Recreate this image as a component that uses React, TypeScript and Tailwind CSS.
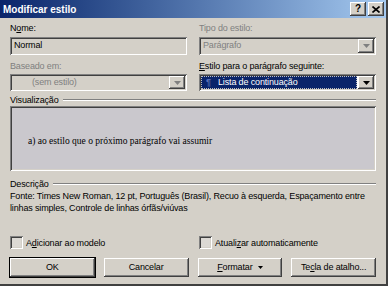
import React from "react";

const raised =
  "shadow-[inset_-1px_-1px_#404040,inset_1px_1px_#ffffff,inset_-2px_-2px_#808080,inset_2px_2px_#d4d0c8]";
const sunken =
  "shadow-[inset_1px_1px_#808080,inset_-1px_-1px_#ffffff,inset_2px_2px_#404040,inset_-2px_-2px_#d4d0c8]";

function Arrow({ disabled, small }: { disabled?: boolean; small?: boolean }) {
  return small ? (
    <svg width="5" height="3" viewBox="0 0 5 3">
      <path d="M0 0 H5 L2.5 3 Z" fill="#000000" />
    </svg>
  ) : (
    <svg width="7" height="4" viewBox="0 0 7 4">
      <path d="M0 0 H7 L3.5 4 Z" fill={disabled ? "#808080" : "#000000"} />
    </svg>
  );
}

function DropButton({ disabled }: { disabled?: boolean }) {
  return (
    <div className={`w-[16px] self-stretch flex items-center justify-center bg-[#d4d0c8] ${raised}`}>
      <Arrow disabled={disabled} />
    </div>
  );
}

function Label({ children, disabled }: { children: React.ReactNode; disabled?: boolean }) {
  return (
    <div className={`h-[12px] leading-[12px] ${disabled ? "text-[#808080]" : "text-black"}`}>{children}</div>
  );
}

function GroupTitle({ children }: { children: React.ReactNode }) {
  return (
    <div className="flex items-center h-[12px] leading-[12px]">
      <span>{children}</span>
      <div className="flex-1 ml-[4px] border-t border-b border-t-[#808080] border-b-white" />
    </div>
  );
}

function Check({ children }: { children: React.ReactNode }) {
  return (
    <div className="flex items-center gap-[3px] h-[13px]">
      <div className={`w-[13px] h-[13px] bg-[#dcd9d4] ${sunken}`} />
      <span className="leading-[12px]">{children}</span>
    </div>
  );
}

function Button({ children, main }: { children: React.ReactNode; main?: boolean }) {
  return (
    <div
      className={`h-[19px] flex items-center justify-center bg-[#d4d0c8] ${raised} ${
        main ? "outline outline-1 outline-black" : ""
      }`}
    >
      {children}
    </div>
  );
}

export default function App() {
  return (
    <div className="w-[388px] h-[286px] bg-[#d4d0c8] flex flex-col font-['Liberation_Sans',Arial,sans-serif] text-[9px] tracking-[-0.15px] text-black border-r-2 border-b-2 border-r-[#404040] border-b-[#404040] overflow-hidden">
      <div className="h-[18px] shrink-0 flex items-center justify-between pl-[3px] pr-[2px] bg-gradient-to-r from-[#0a246a] to-[#a6caf0]">
        <span className="text-white font-bold text-[10px] tracking-normal">Modificar estilo</span>
        <div className="flex gap-[2px]">
          <div className={`w-[16px] h-[14px] flex items-center justify-center bg-[#d4d0c8] ${raised} font-bold text-[10px] leading-none`}>
            ?
          </div>
          <div className={`w-[16px] h-[14px] flex items-center justify-center bg-[#d4d0c8] ${raised}`}>
            <svg width="8" height="7" viewBox="0 0 8 7">
              <path d="M0.5 0.5 L7.5 6.5 M7.5 0.5 L0.5 6.5" stroke="#000" strokeWidth="1.6" />
            </svg>
          </div>
        </div>
      </div>

      <div className="flex-1 flex flex-col px-[10px] pt-[4px]">
        <div className="grid grid-cols-2 gap-x-[12px]">
          <div className="flex flex-col">
            <Label>
              N<span className="underline">o</span>me:
            </Label>
            <div className={`mt-[3px] h-[18px] flex items-center pl-[4px] bg-[#d4d0c8] ${sunken}`}>Normal</div>
          </div>
          <div className="flex flex-col">
            <Label disabled>Tipo do estilo:</Label>
            <div className={`mt-[3px] h-[18px] flex items-center p-[2px] bg-[#d4d0c8] ${sunken}`}>
              <span className="flex-1 pl-[2px] text-[#808080]">Parágrafo</span>
              <DropButton disabled />
            </div>
          </div>
          <div className="flex flex-col mt-[5px]">
            <Label disabled>Baseado em:</Label>
            <div className={`mt-[2px] h-[17px] flex items-center p-[2px] bg-[#d4d0c8] ${sunken}`}>
              <span className="flex-1 pl-[20px] text-[#808080]">(sem estilo)</span>
              <DropButton disabled />
            </div>
          </div>
          <div className="flex flex-col mt-[5px]">
            <Label>
              <span className="underline">E</span>stilo para o parágrafo seguinte:
            </Label>
            <div className={`mt-[2px] h-[17px] flex items-center p-[2px] bg-white ${sunken}`}>
              <div className="flex-1 self-stretch flex items-center bg-[#0a246a] text-white border border-dotted border-[#c0c0c0] mr-[1px]">
                <span className="ml-[4px] w-[12px] text-[#5870b8] font-bold text-[9px]">¶</span>
                <span>Lista de continuação</span>
              </div>
              <DropButton />
            </div>
          </div>
        </div>

        <div className="mt-[3px]">
          <GroupTitle>Visualização</GroupTitle>
        </div>
        <div className={`h-[65px] flex items-center pl-[18px] pt-[5px] bg-[#cac8cd] ${sunken}`}>
          <span className="font-['Liberation_Serif',serif] text-[9.5px] tracking-normal">
            a) ao estilo que o próximo parágrafo vai assumir
          </span>
        </div>

        <div className="mt-[7px]">
          <GroupTitle>Descrição</GroupTitle>
        </div>
        <p className="leading-[12px]">
          Fonte: Times New Roman, 12 pt, Português (Brasil), Recuo à esquerda, Espaçamento entre linhas simples,
          Controle de linhas órfãs/viúvas
        </p>

        <div className="grid grid-cols-2 gap-x-[12px] mt-[22px]">
          <Check>
            A<span className="underline">d</span>icionar ao modelo
          </Check>
          <Check>
            Atuali<span className="underline">z</span>ar automaticamente
          </Check>
        </div>

        <div className="grid grid-cols-4 gap-x-[9px] mt-[9px]">
          <Button main>OK</Button>
          <Button>Cancelar</Button>
          <Button>
            <span className="underline">F</span>ormatar
            <span className="ml-[5px] flex items-center">
              <Arrow small />
            </span>
          </Button>
          <Button>
            Te<span className="underline">c</span>la de atalho...
          </Button>
        </div>
      </div>
    </div>
  );
}
